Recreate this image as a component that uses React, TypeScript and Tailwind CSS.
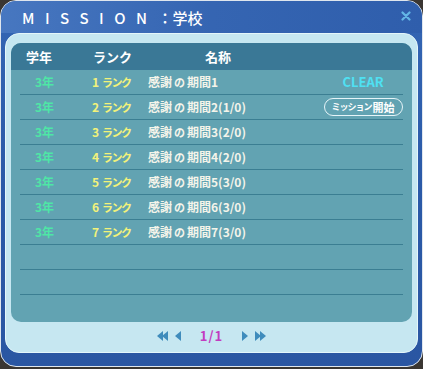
import React from 'react';

const rows = [
  { year: '3年', rank: '1', name: '感謝の期間1', status: 'clear' },
  { year: '3年', rank: '2', name: '感謝の期間2(1/0)', status: 'start' },
  { year: '3年', rank: '3', name: '感謝の期間3(2/0)', status: '' },
  { year: '3年', rank: '4', name: '感謝の期間4(2/0)', status: '' },
  { year: '3年', rank: '5', name: '感謝の期間5(3/0)', status: '' },
  { year: '3年', rank: '6', name: '感謝の期間6(3/0)', status: '' },
  { year: '3年', rank: '7', name: '感謝の期間7(3/0)', status: '' },
  null,
  null,
  null,
];

const font = { fontFamily: '"Noto Sans CJK JP", "Noto Sans", sans-serif' };

function Arrow({ dir, double }: { dir: 'l' | 'r'; double?: boolean }) {
  const flip = dir === 'l' ? 'scale(-1,1) translate(-12,0)' : undefined;
  return (
    <svg width={double ? 12 : 7} height="12" viewBox={double ? '0 0 12 12' : '0 0 7 12'}>
      {double ? (
        <g transform={flip}>
          <path d="M0 1 L6 6 L0 11 Z" fill="#3f8cbc" />
          <path d="M5 1 L11 6 L5 11 Z" fill="#3f8cbc" />
        </g>
      ) : (
        <path d={dir === 'l' ? 'M7 1 L1 6 L7 11 Z' : 'M0 1 L6 6 L0 11 Z'} fill="#3f8cbc" />
      )}
    </svg>
  );
}

export default function App() {
  return (
    <div className="w-[423px] h-[369px] bg-[#3a3632]" style={font}>
      <div className="w-[423px] h-[367px] rounded-[16px] border border-[#dfe6ee] bg-gradient-to-b from-[#3466b4] via-[#2b5aa8] to-[#2a56a2] overflow-hidden flex flex-col">
        <div className="h-[32px] flex items-center justify-between pl-[21px] pr-[11px] bg-gradient-to-r from-[#4777c0] via-[#3565b2] to-[#2f5eac]">
          <div className="text-white text-[15px] font-medium tracking-[10.5px] leading-none pt-[1px]">
            MISSION<span className="tracking-[0px]">：学校</span>
          </div>
          <svg width="10" height="10" viewBox="0 0 10 10" className="mb-[2px]">
            <path d="M1.5 1.5 L8.5 8.5 M8.5 1.5 L1.5 8.5" stroke="#63b6e6" strokeWidth="2.2" strokeLinecap="round" />
          </svg>
        </div>
        <div className="mx-[4px] h-[320px] rounded-[14px] border border-[#e4f6fa] bg-[#c6e7f1] px-[5px] pt-[9px] flex flex-col">
          <div className="h-[279px] rounded-[10px] overflow-hidden bg-[#62a3b2] flex flex-col">
            <div className="h-[27px] bg-[#3a7896] flex items-center text-white text-[13px] font-bold">
              <span className="ml-[15px] w-[67px]">学年</span>
              <span className="w-[112px]">ランク</span>
              <span>名称</span>
            </div>
            <div className="mx-[9px] flex flex-col">
              {rows.map((r, i) => (
                <div
                  key={i}
                  className={`h-[25px] flex items-center text-[12px] font-bold ${i < 9 ? 'border-b border-[#3b7e92]' : ''}`}
                >
                  {r && (
                    <>
                      <span className="w-[72px] pl-[15px] text-[#4ee6a6]">{r.year}</span>
                      <span className="w-[56px] text-[#f2f27a]">
                        {r.rank}
                        <span className="ml-[3px] text-[11px] tracking-[-1.5px]">ランク</span>
                      </span>
                      <span className="flex-1 text-[#f4f4ea]">
                        感謝<span className="text-[11px] mx-[2px]">の</span>
                        {r.name.slice(3)}
                      </span>
                      <span className="w-[80px] flex justify-center">
                        {r.status === 'clear' && (
                          <span className="text-[#4fe0f2] text-[13px] font-bold">CLEAR</span>
                        )}
                        {r.status === 'start' && (
                          <span className="w-[79px] h-[18px] rounded-full border border-[#e6f4f8] text-white text-[11px] flex items-center justify-center">
                            <span className="text-[9px] tracking-[-1px]">ミッション</span>
                            <span className="ml-[1px]">開始</span>
                          </span>
                        )}
                      </span>
                    </>
                  )}
                </div>
              ))}
            </div>
          </div>
          <div className="pt-[4px] flex justify-center">
            <div className="flex items-center">
              <Arrow dir="l" double />
              <span className="ml-[6px]"><Arrow dir="l" /></span>
              <span className="mx-[19px] text-[#c23cc0] text-[13px] font-bold tracking-[1px]">1/1</span>
              <Arrow dir="r" />
              <span className="ml-[6px]"><Arrow dir="r" double /></span>
            </div>
          </div>
        </div>
      </div>
    </div>
  );
}
